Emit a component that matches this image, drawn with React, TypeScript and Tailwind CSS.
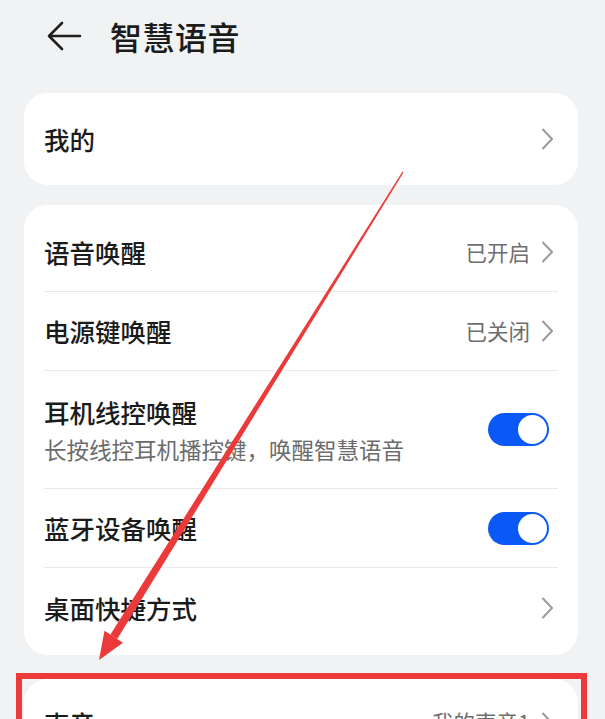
import type { ReactNode } from 'react';

const font = { fontFamily: '"Noto Sans CJK SC", "Noto Sans", sans-serif' };

function Chevron() {
    return (
        <svg width="13" height="22" viewBox="0 0 13 22" className="shrink-0 mr-[4px]">
            <path d="M2 1.5 L11 11 L2 20.5" fill="none" stroke="#9b9b9b" strokeWidth="2" strokeLinecap="round" strokeLinejoin="round" />
        </svg>
    );
}

function Toggle() {
    return (
        <div className="w-[61px] h-[33px] mr-[9px] rounded-full bg-[#0a59f7] flex items-center justify-end pr-[2px] shrink-0">
            <div className="w-[29px] h-[29px] rounded-full bg-white" />
        </div>
    );
}

function Row({ title, sub, value, right, last }: { title: string; sub?: string; value?: string; right: ReactNode; last?: boolean }) {
    return (
        <div className={`flex items-center justify-between ${sub ? 'h-[118px]' : 'h-[79px]'} ${last ? '' : 'border-b border-[#e9e9eb]'}`}>
            <div className="flex flex-col">
                <span className="text-[25.5px] leading-[32px] font-medium text-[#1b1b1b]">{title}</span>
                {sub && <span className="text-[22.5px] leading-[30px] mt-[6px] text-[#6b6b6b]">{sub}</span>}
            </div>
            <div className="flex items-center gap-[11px]">
                {value && <span className="text-[21.5px] text-[#6e6e6e]">{value}</span>}
                {right}
            </div>
        </div>
    );
}

export default function App() {
    return (
        <div className="relative w-[605px] h-[719px] overflow-hidden bg-[#f1f2f4]" style={font}>
            {/* Header */}
            <div className="h-[72px] flex items-center pl-[46px]">
                <svg width="36" height="32" viewBox="0 0 36 32">
                    <path d="M34 16 H3 M16 3 L3 16 L16 29" fill="none" stroke="#1f1f1f" strokeWidth="2.6" strokeLinecap="round" strokeLinejoin="round" />
                </svg>
                <h1 className="ml-[28px] text-[32px] font-medium text-[#1b1b1b] tracking-[0.5px]">智慧语音</h1>
            </div>

            {/* 我的 */}
            <div className="mt-[21px] ml-[24px] w-[554px] h-[92px] rounded-[24px] bg-white flex items-center justify-between pl-[20px] pr-[20px]">
                <span className="text-[25.5px] font-medium text-[#1b1b1b]">我的</span>
                <Chevron />
            </div>

            {/* Wake-up settings */}
            <div className="mt-[20px] ml-[24px] w-[554px] rounded-[24px] bg-white py-[8px] px-[20px]">
                <Row title="语音唤醒" value="已开启" right={<Chevron />} />
                <Row title="电源键唤醒" value="已关闭" right={<Chevron />} />
                <Row title="耳机线控唤醒" sub="长按线控耳机播控键，唤醒智慧语音" right={<Toggle />} />
                <Row title="蓝牙设备唤醒" right={<Toggle />} />
                <Row title="桌面快捷方式" right={<Chevron />} last />
            </div>

            {/* 声音 */}
            <div className="mt-[24px] ml-[24px] w-[554px] rounded-[24px] bg-white pt-[4px] px-[20px]">
                <Row title="声音" value="我的声音1" right={<Chevron />} last />
            </div>

            {/* Annotation: highlight box and arrow */}
            <div className="absolute left-[16px] top-[673px] w-[571px] h-[70px] border-[6px] border-[#ec3a3a] pointer-events-none" />
            <svg className="absolute inset-0 pointer-events-none" width="605" height="719" viewBox="0 0 605 719">
                <polygon points="402.5,171.6 403.5,172.4 117.2,639.1 110.3,634.8" fill="#ec3a3a" />
                <polygon points="99,660 104.5,630.8 123,642.8" fill="#ec3a3a" />
            </svg>
        </div>
    );
}
